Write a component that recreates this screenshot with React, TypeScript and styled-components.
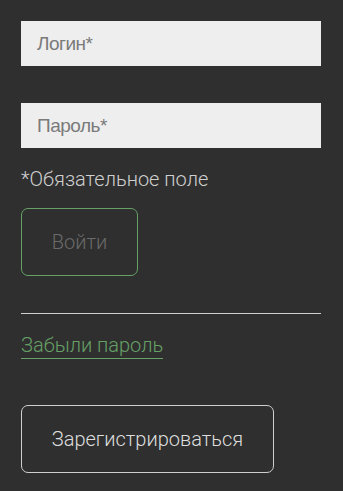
import React from "react";
import styled, { createGlobalStyle } from "styled-components";

const GlobalStyle = createGlobalStyle`
  html, body {
    margin: 0;
    padding: 0;
    background: #2f2f2f;
  }
  * {
    box-sizing: border-box;
  }
`;

const Form = styled.form`
  width: 343px;
  min-height: 491px;
  padding: 21px 22px 0 21px;
  display: flex;
  flex-direction: column;
  font-family: Roboto, "Liberation Sans", sans-serif;
  font-weight: 300;
`;

const Input = styled.input<{ $gap?: number }>`
  width: 300px;
  height: 45px;
  border: none;
  outline: none;
  background: #eeeeee;
  padding: 0 15px 0 16px;
  font-family: "Liberation Sans", Arial, sans-serif;
  font-weight: 400;
  font-size: 19px;
  letter-spacing: -0.5px;
  color: #333;
  margin-bottom: ${(p) => p.$gap ?? 0}px;

  &::placeholder {
    color: #7a7a7a;
  }
`;

const Hint = styled.div`
  margin-top: 20px;
  font-size: 20px;
  line-height: 22px;
  color: #cfcfcf;
`;

const Button = styled.button<{ $variant: "login" | "register" }>`
  height: 68px;
  width: ${({ $variant }) => ($variant === "login" ? "117px" : "253px")};
  border-radius: 7px;
  background: transparent;
  border: 1px solid
    ${({ $variant }) => ($variant === "login" ? "#66a066" : "#cfcfcf")};
  color: ${({ $variant }) => ($variant === "login" ? "#6a6a6a" : "#dedede")};
  font-family: Roboto, "Liberation Sans", sans-serif;
  font-weight: 300;
  font-size: 20px;
  cursor: pointer;
`;

const LoginButton = styled(Button)`
  margin-top: 18px;
`;

const Divider = styled.hr`
  width: 300px;
  margin: 37px 0 0;
  border: none;
  border-top: 1px solid #cfcfcf;
  height: 0;
`;

const ForgotLink = styled.a`
  align-self: flex-start;
  margin-top: 19px;
  font-size: 20px;
  line-height: 24px;
  color: #66a066;
  text-decoration: none;
  border-bottom: 1px solid #66a066;
  padding-bottom: 1px;
  cursor: pointer;
`;

const RegisterButton = styled(Button)`
  margin-top: 46px;
`;

export default function App() {
  return (
    <>
      <GlobalStyle />
      <Form onSubmit={(e) => e.preventDefault()}>
        <Input placeholder="Логин*" $gap={37} />
        <Input placeholder="Пароль*" type="password" />
        <Hint>*Обязательное поле</Hint>
        <LoginButton $variant="login">Войти</LoginButton>
        <Divider />
        <ForgotLink>Забыли пароль</ForgotLink>
        <RegisterButton $variant="register" type="button">
          Зарегистрироваться
        </RegisterButton>
      </Form>
    </>
  );
}
